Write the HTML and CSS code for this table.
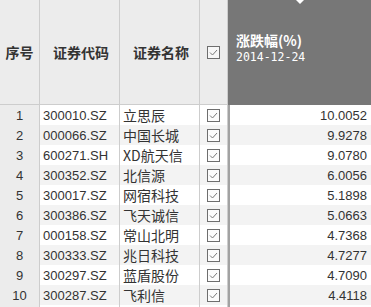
FILE: index.html
```html
<!DOCTYPE html>
<html>
<head>
<meta charset="utf-8">
<link rel="stylesheet" href="styles.css">
</head>
<body>
<div class="grid">
  <div class="row head">
    <div class="c seq hc">序号</div>
    <div class="c code hc">证券代码</div>
    <div class="c name hc">证券名称</div>
    <div class="c chk hc"><svg class="box" width="13" height="13" viewBox="0 0 13 13"><rect x="0.5" y="0.5" width="12" height="12" fill="#f7f7f7" stroke="#6e6e6e"/><path d="M3 6.5 L5.5 9 L10 4" fill="none" stroke="#7a7a7a" stroke-width="1"/></svg></div>
    <div class="c val hv">
      <span class="tri"></span>
      <div class="ht">涨跌幅(%)</div>
      <div class="hd">2014-12-24</div>
    </div>
  </div>
  <div id="body"></div>
</div>
<script>
const data=[["300010.SZ","立思辰","10.0052"],["000066.SZ","中国长城","9.9278"],["600271.SH","XD航天信","9.0780"],["300352.SZ","北信源","6.0056"],["300017.SZ","网宿科技","5.1898"],["300386.SZ","飞天诚信","5.0663"],["000158.SZ","常山北明","4.7368"],["300333.SZ","兆日科技","4.7277"],["300297.SZ","蓝盾股份","4.7090"],["300287.SZ","飞利信","4.4118"],["","",""]];
const box='<svg class="box" width="13" height="13" viewBox="0 0 13 13"><rect x="0.5" y="0.5" width="12" height="12" fill="#fcfcfc" stroke="#6e6e6e"/><path d="M3 6.5 L5.5 9 L10 4" fill="none" stroke="#7a7a7a" stroke-width="1"/></svg>';
document.getElementById('body').innerHTML=data.map((d,i)=>`<div class="row ${i%2?'even':'odd'}"><div class="c seq">${d[0]?i+1:''}</div><div class="c code">${d[0]}</div><div class="c name">${d[1]}</div><div class="c chk">${d[0]?box:''}</div><div class="c val">${d[2]}</div></div>`).join('');
</script>
</body>
</html>
```
FILE: styles.css
```css
html,body{margin:0;padding:0;background:#fff;}
body{width:371px;height:307px;overflow:hidden;font-family:"Liberation Sans",Arial,sans-serif;color:#333;}
.grid{width:371px;height:307px;overflow:hidden;}
.row{display:grid;grid-template-columns:40px 80px 80px 28px 143px;height:20px;}
.row.head{height:105px;}
.c{box-sizing:border-box;border-right:1px solid #cdcdcd;display:flex;align-items:center;font-size:13px;white-space:nowrap;overflow:hidden;}
.head .c{border-bottom:1px solid #cdcdcd;background:#ececec;}
.hc{justify-content:center;font-family:"Noto Sans CJK SC",sans-serif;font-weight:bold;font-size:14px;color:#333;}
.head .val.hv{background:#777;border:none;display:block;position:relative;padding:31px 0 0 8px;color:#fff;}
.tri{position:absolute;left:68px;top:0;width:0;height:0;border-left:4px solid transparent;border-right:4px solid transparent;border-top:4px solid #fff;}
.ht{font-family:"Noto Sans CJK SC",sans-serif;font-weight:bold;font-size:14px;line-height:18px;}
.hd{font-family:"DejaVu Sans Mono",monospace;font-size:11.5px;line-height:17px;}
.seq{justify-content:center;background:#ececec;}
.odd .c{background:#fff;}
.even .c{background:#f3f3f3;}
.row .c.seq{background:#ececec;}
.code{padding-left:3px;}
.name{padding-left:3px;font-family:"Noto Sans CJK SC",sans-serif;font-size:14px;}
.chk{justify-content:center;}
.box{display:block;}
.row:not(.head) .val{justify-content:flex-end;padding-right:4px;border-right:none;border-left:2px solid #a2a2a2;}
```
